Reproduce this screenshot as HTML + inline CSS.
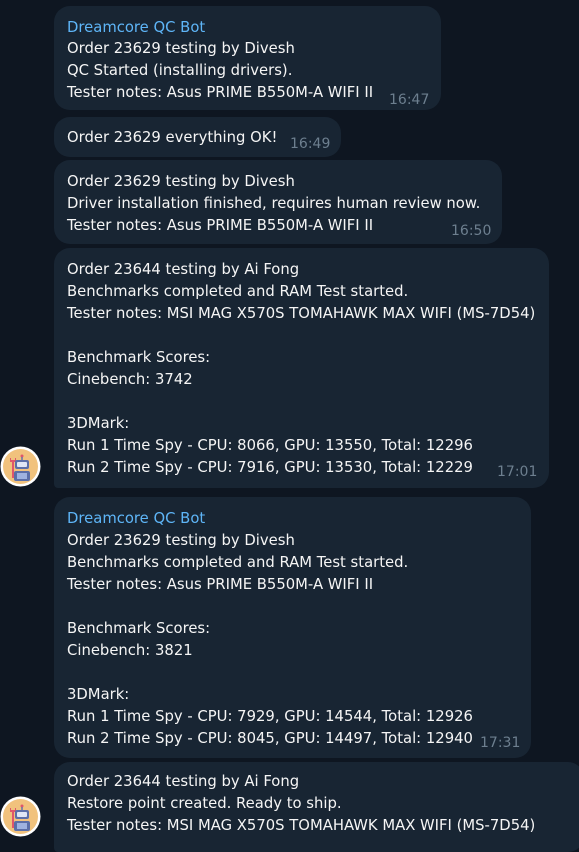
<!DOCTYPE html>
<html><head><meta charset="utf-8"><style>
html,body{margin:0;padding:0;width:579px;height:841px;overflow:hidden;background:#0e1621;font-family:"DejaVu Sans","Liberation Sans",sans-serif;}
.b{position:absolute;left:54px;background:#182533;border-radius:16px;color:#f5f5f5;font-size:14.8px;box-sizing:border-box;}
.l{position:absolute;left:13px;height:22px;line-height:22px;white-space:nowrap;top:0;}
.n{color:#5eb5f7;}
.t{position:absolute;color:#6d7f8f;font-size:14px;line-height:16px;}
.av{position:absolute;left:0;width:41px;height:41px;}
</style></head><body>

<div class="b" style="top:6px;width:387px;height:104px">
<div class="l n" style="top:11px">Dreamcore QC Bot</div>
<div class="l" style="top:32px">Order 23629 testing by Divesh</div>
<div class="l" style="top:54px">QC Started (installing drivers).</div>
<div class="l" style="top:76px">Tester notes: Asus PRIME B550M-A WIFI II</div>
<div class="t" style="left:335px;top:86px">16:47</div>
</div>

<div class="b" style="top:117px;width:287px;height:40px">
<div class="l" style="top:10px">Order 23629 everything OK!</div>
<div class="t" style="left:236px;top:19px">16:49</div>
</div>

<div class="b" style="top:160px;width:448px;height:84px">
<div class="l" style="top:11px">Order 23629 testing by Divesh</div>
<div class="l" style="top:33px">Driver installation finished, requires human review now.</div>
<div class="l" style="top:55px">Tester notes: Asus PRIME B550M-A WIFI II</div>
<div class="t" style="left:397px;top:63px">16:50</div>
</div>

<div class="b" style="top:248px;width:495px;height:240px;border-bottom-left-radius:4px">
<div class="l" style="top:11px">Order 23644 testing by Ai Fong</div>
<div class="l" style="top:33px">Benchmarks completed and RAM Test started.</div>
<div class="l" style="top:55px">Tester notes: MSI MAG X570S TOMAHAWK MAX WIFI (MS-7D54)</div>
<div class="l" style="top:99px">Benchmark Scores:</div>
<div class="l" style="top:121px">Cinebench: 3742</div>
<div class="l" style="top:165px">3DMark:</div>
<div class="l" style="top:187px">Run 1 Time Spy - CPU: 8066, GPU: 13550, Total: 12296</div>
<div class="l" style="top:209px">Run 2 Time Spy - CPU: 7916, GPU: 13530, Total: 12229</div>
<div class="t" style="left:443px;top:216px">17:01</div>
</div>
<svg class="av" style="top:446px" viewBox="0 0 41 41"><circle cx="20.5" cy="20.5" r="20" fill="#fff"/><circle cx="20.5" cy="20.5" r="17.5" fill="#f1c27d"/><path d="M10 12v4h2v16h2V16h2v-4h-1v2h-4v-2z" fill="#e0566b"/><circle cx="22" cy="10" r="1.5" fill="#e0566b"/><rect x="21.3" y="11" width="1.4" height="3" fill="#5b6fa8"/><rect x="15" y="14" width="14" height="9" rx="2" fill="#5b6fa8"/><rect x="17" y="16" width="10" height="5" rx="1" fill="#dfe6f5"/><rect x="14" y="25" width="16" height="10" rx="2" fill="#5b6fa8"/><rect x="17" y="27" width="10" height="6" fill="#9fb3e0"/></svg>

<div class="b" style="top:497px;width:477px;height:261px">
<div class="l n" style="top:11px">Dreamcore QC Bot</div>
<div class="l" style="top:33px">Order 23629 testing by Divesh</div>
<div class="l" style="top:55px">Benchmarks completed and RAM Test started.</div>
<div class="l" style="top:77px">Tester notes: Asus PRIME B550M-A WIFI II</div>
<div class="l" style="top:121px">Benchmark Scores:</div>
<div class="l" style="top:143px">Cinebench: 3821</div>
<div class="l" style="top:187px">3DMark:</div>
<div class="l" style="top:209px">Run 1 Time Spy - CPU: 7929, GPU: 14544, Total: 12926</div>
<div class="l" style="top:231px">Run 2 Time Spy - CPU: 8045, GPU: 14497, Total: 12940</div>
<div class="t" style="left:426px;top:238px">17:31</div>
</div>

<div class="b" style="top:762px;width:530px;height:90px;border-bottom-left-radius:4px">
<div class="l" style="top:9px">Order 23644 testing by Ai Fong</div>
<div class="l" style="top:31px">Restore point created. Ready to ship.</div>
<div class="l" style="top:53px">Tester notes: MSI MAG X570S TOMAHAWK MAX WIFI (MS-7D54)</div>
</div>
<svg class="av" style="top:796px" viewBox="0 0 41 41"><circle cx="20.5" cy="20.5" r="20" fill="#fff"/><circle cx="20.5" cy="20.5" r="17.5" fill="#f1c27d"/><path d="M10 12v4h2v16h2V16h2v-4h-1v2h-4v-2z" fill="#e0566b"/><circle cx="22" cy="10" r="1.5" fill="#e0566b"/><rect x="21.3" y="11" width="1.4" height="3" fill="#5b6fa8"/><rect x="15" y="14" width="14" height="9" rx="2" fill="#5b6fa8"/><rect x="17" y="16" width="10" height="5" rx="1" fill="#dfe6f5"/><rect x="14" y="25" width="16" height="10" rx="2" fill="#5b6fa8"/><rect x="17" y="27" width="10" height="6" fill="#9fb3e0"/></svg>

</body></html>
